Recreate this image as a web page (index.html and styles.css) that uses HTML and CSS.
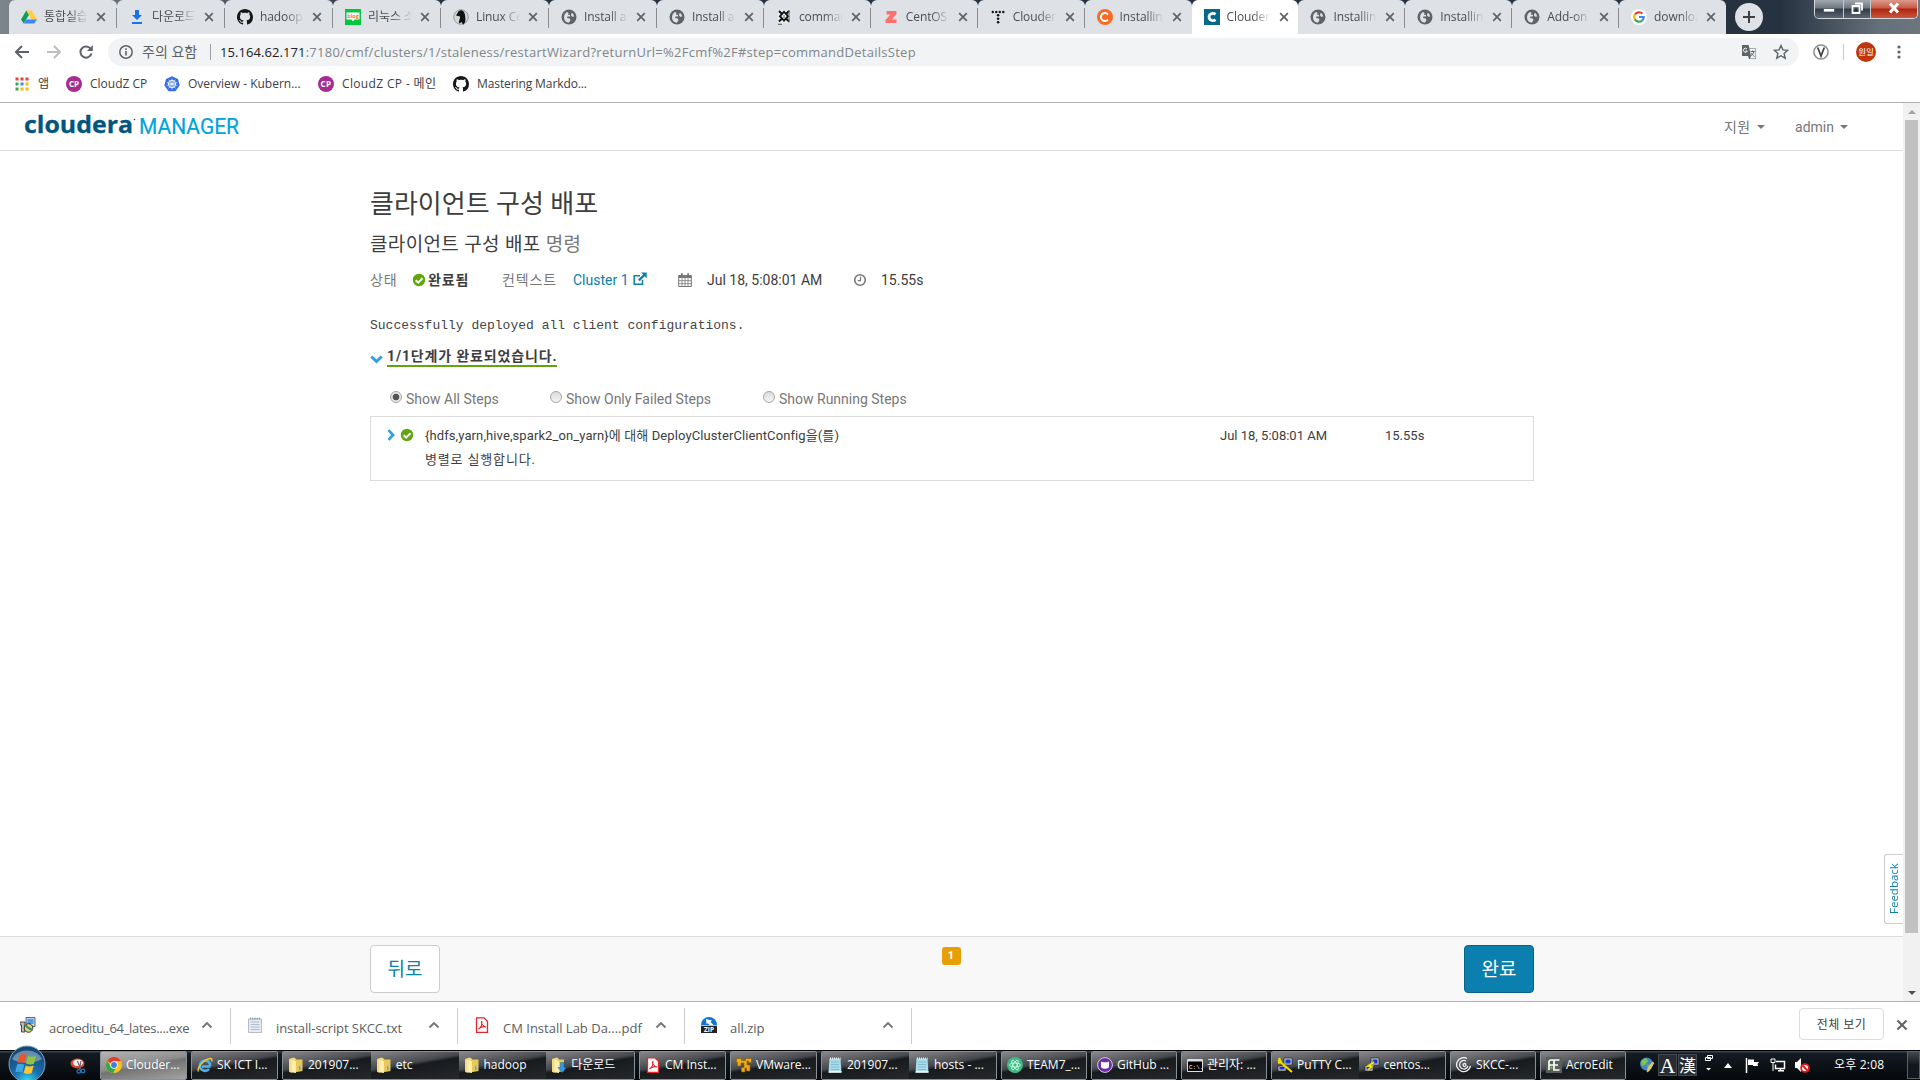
FILE: index.html
```html
<!DOCTYPE html>
<html lang="ko">
<head>
<meta charset="utf-8">
<title>Cloudera Manager</title>
<link rel="stylesheet" href="styles.css">
</head>
<body>
<svg class="defs" aria-hidden="true">
  <symbol id="x" viewBox="0 0 10 10"><path d="M1.2 1.2l7.6 7.6M8.8 1.2L1.2 8.8" stroke="#5f6368" stroke-width="1.7" fill="none"/></symbol>
  <symbol id="up" viewBox="0 0 12 8"><path d="M1.5 6.5L6 2l4.500 4.500" stroke="#757575" stroke-width="1.900" fill="none"/></symbol>
  <symbol id="drive" viewBox="0 0 16 16"><path d="M5.300 1.500L0 10.500l2.700 4L8 5.800z" fill="#0f9d58"/><path d="M5.300 1.500h5.400l5.300 9h-5.300z" fill="#ffcd40"/><path d="M5.200 10.500H16l-2.700 4H2.700z" fill="#4285f4"/></symbol>
  <symbol id="dl" viewBox="0 0 16 16"><path d="M6 1h4v5h3l-5 5-5-5h3zM3 13h10v2H3z" fill="#1a73e8"/></symbol>
  <symbol id="gh" viewBox="0 0 16 16"><path fill="#161616" d="M8 0C3.580 0 0 3.580 0 8c0 3.540 2.290 6.530 5.470 7.590.4.070.550-.170.550-.380 0-.190-.010-.820-.010-1.490-2.010.370-2.530-.490-2.690-.940-.090-.230-.480-.940-.820-1.130-.280-.150-.680-.520-.010-.530.630-.010 1.080.580 1.230.820.720 1.210 1.870.870 2.330.660.070-.520.280-.870.510-1.070-1.780-.2-3.640-.890-3.640-3.950 0-.870.310-1.590.820-2.150-.080-.2-.360-1.020.080-2.120 0 0 .670-.210 2.200.820.640-.180 1.320-.270 2-.270s1.360.090 2 .270c1.530-1.040 2.200-.820 2.200-.820.440 1.100.160 1.920.080 2.120.510.560.820 1.270.820 2.150 0 3.070-1.870 3.750-3.650 3.950.290.250.540.730.540 1.480 0 1.070-.010 1.930-.010 2.200 0 .210.150.460.550.380A8.010 8.010 0 0016 8c0-4.420-3.580-8-8-8z"/></symbol>
  <symbol id="blog" viewBox="0 0 16 16"><path d="M0 0h16v16H0z" fill="#03c63c"/><path d="M1.500 3.500h13v7H9.500L8 12.500l-1.500-2h-5z" fill="#fff"/><text x="8" y="9" font-size="5.500" font-weight="700" text-anchor="middle" fill="#f47a20" font-family="Open Sans">blog</text></symbol>
  <symbol id="penguin" viewBox="0 0 16 16"><circle cx="8" cy="8" r="7.300" fill="#d4d7da" stroke="#8f9296" stroke-width=".9"/><path d="M4.500 4C5.500 1 9 0 11 3c1.500 3 1.700 8 1.200 10l-2 2.800L8.500 13l-2 1.500C5 12 7.500 10 7 7.500L3 6.500z" fill="#111"/></symbol>
  <symbol id="globe" viewBox="0 0 16 16"><circle cx="8" cy="8" r="7.500" fill="#5f6368"/><path d="M3 8.500C3 6 4 4 6 3l1.500.8L7 5.500l2 .5v1.500H6.500L6 9l2.800.5.7 1.800-1.700 2.500C5 13.500 3 11.500 3 8.500zM10.500 4l1.500.5 1.300 3-2.300.3-1-1.500z" fill="#dee1e6"/></symbol>
  <symbol id="cmd" viewBox="0 0 16 16"><path d="M2.500 1.500h11v12h-11z" fill="#f4f4f4"/><path d="M3 2l3 3M13 2l-3 3M3 12.500l3-3M13 12.500l-3-3" stroke="#111" stroke-width="2"/><path d="M8 2.800l4 4.400-4 4.400-4-4.400z" stroke="#111" stroke-width="1.900" fill="#fff"/><path d="M8 6v3M13 1v12.500M2 15.300h4" stroke="#555"/></symbol>
  <symbol id="zed" viewBox="0 0 16 16"><path d="M3.500 2h10v3l-4.700 5.500h4.700V14h-11v-3l4.800-5.600H3.500z" fill="#ff6f6b"/></symbol>
  <symbol id="dots" viewBox="0 0 16 16" fill="#111"><circle cx="2.800" cy="3" r="1.200"/><circle cx="6.300" cy="3" r="1.200"/><circle cx="9.800" cy="3" r="1.200"/><circle cx="13.300" cy="3" r="1.200"/><circle cx="8.100" cy="6.300" r="1.300"/><circle cx="8.100" cy="9.800" r="1.300"/><circle cx="8.100" cy="13.300" r="1.300"/></symbol>
  <symbol id="oc" viewBox="0 0 16 16"><circle cx="8" cy="8" r="8" fill="#f96a22"/><path d="M11 5.500a4 4 0 100 5" stroke="#fff" stroke-width="2" fill="none"/></symbol>
  <symbol id="cc" viewBox="0 0 16 16"><path d="M0 0h16v16H0z" fill="#04698a"/><path d="M11.500 5.300a3.900 3.600 0 100 5.400" stroke="#fff" stroke-width="2.800" fill="none"/></symbol>
  <symbol id="google" viewBox="0 0 16 16"><circle cx="8" cy="8" r="8" fill="#fff"/><g fill="none" stroke-width="2.200"><path d="M4 5.500A4.800 4.800 0 0111.400 4.600" stroke="#ea4335"/><path d="M4 5.400a5 5 0 000 5.200" stroke="#fbbc05"/><path d="M3.900 10.400a4.800 4.800 0 007.200 1.200" stroke="#34a853"/><path d="M8 8h4.700a5 5 0 01-1.500 3.700" stroke="#4285f4"/></g></symbol>
  <symbol id="cp" viewBox="0 0 16 16"><circle cx="8" cy="8" r="8" fill="#a62c91"/><text x="8" y="11" font-size="8" font-weight="700" text-anchor="middle" fill="#fff" font-family="Open Sans">CP</text></symbol>
  <symbol id="k8s" viewBox="0 0 16 16"><path d="M8 .2l6 2.900 1.600 6.400-4.200 5.800H4.600L.4 9.500 2 3.100z" fill="#326ce5"/><g stroke="#fff" fill="none"><circle cx="8" cy="8" r="3.600"/><path d="M8 2.500v11M2.700 6.500l10.600 3M13.300 6.500l-10.600 3M4.700 12.300l6.600-8.600M11.300 12.300L4.700 3.700" stroke-width=".7"/></g></symbol>
  <symbol id="apps" viewBox="0 0 14 14"><path d="M.5.500h3v3h-3zM5.500.500h3v3h-3zM10.500.500h3v3h-3z" fill="#ea4335"/><path d="M.5 5.500h3v3h-3z" fill="#34a853"/><path d="M5.500 5.500h3v3h-3z" fill="#4285f4"/><path d="M10.500 5.500h3v3h-3z" fill="#fbbc05"/><path d="M.5 10.500h3v3h-3z" fill="#34a853"/><path d="M5.500 10.500h3v3h-3zM10.500 10.500h3v3h-3z" fill="#fbbc05"/></symbol>
  <symbol id="ok" viewBox="0 0 14 14"><circle cx="7" cy="7" r="6.200" fill="#61a60e"/><path d="M3.700 7.200L6.200 9.700l4.300-4.400" stroke="#fff" stroke-width="2" fill="none"/></symbol>
  <symbol id="pdf" viewBox="0 0 16 16"><path d="M2.500.8h7.500l3.500 3.500v11h-11z" fill="#fff" stroke="#e5252a" stroke-width="1.300"/><path d="M4.500 12c2.500-1.500 4-5 3.300-7.500C6.500 5 8.500 9.500 12 10c-1.500-1-5.500 0-7.500 2z" stroke="#e5252a" fill="none" stroke-width="1.100"/></symbol>
  <symbol id="folder" viewBox="0 0 16 16"><path d="M1 2l5-1.500L8 2v13l-5 .8-2-1z" fill="#f3dc83"/><path d="M6 2.500h8.500V14L6 15.500z" fill="#e9c75a"/><path d="M3.500 3l4.500 1v12l-4.500-1z" fill="#fbeeb0"/><path d="M11 9h1.500v4H11z" fill="#5aa7d8"/></symbol>
  <symbol id="folderdl" viewBox="0 0 16 16"><path d="M1 2l5-1.500L8 2v13l-5 .8-2-1z" fill="#f3dc83"/><path d="M6 2.500h7V14L6 15.500z" fill="#e9c75a"/><path d="M3.500 3l4.500 1v12l-4.500-1z" fill="#fbeeb0"/><path d="M9.500 5.500h3.500v5h2.500L11.200 15.500 7 10.500h2.500z" fill="#2e9be6" stroke="#1266aa" stroke-width=".5"/></symbol>
  <symbol id="note" viewBox="0 0 16 16"><path d="M2.500 1.500h11l1 14H1.500z" fill="#a9dbe8"/><path d="M2 14h12.500v1.700H1.500z" fill="#e8f5f8"/><path d="M3 1.500h10.500" stroke="#eee" stroke-width="2" stroke-dasharray="1 1"/><path d="M4 5h8M4 7.500h8M4 10h8M4 12.500h8" stroke="#78b6c9" stroke-width=".8"/></symbol>
  <symbol id="putty" viewBox="0 0 16 16"><path d="M7 1h8v7H7zM1 9h8v5H1z" fill="#c5c9cf" stroke="#222" stroke-width=".7"/><path d="M8.500 2.500h5v4h-5zM2.500 10h5v2.500h-5z" fill="#1b35d0"/><path d="M10 5L4 9h4l-4 4" stroke="#ffe600" stroke-width="1.700" fill="none"/></symbol>
  <symbol id="puttyc" viewBox="0 0 16 16"><path d="M7 1h8v7H7zM1 9h8v5H1z" fill="#c5c9cf" stroke="#222" stroke-width=".7"/><path d="M8.500 2.500h5v4h-5zM2.500 10h5v2.500h-5z" fill="#1b35d0"/><path d="M1 3l14 12M2 1l2 4-3 1" stroke="#f4dc00" stroke-width="2.200" fill="none"/></symbol>
</svg>

<header class="tabs">
  <div class="tab-list">
    <div class="tab"><svg><use href="#drive"/></svg><span>통합실습</span><i><svg><use href="#x"/></svg></i></div>
    <div class="tab"><svg><use href="#dl"/></svg><span>다운로드</span><i><svg><use href="#x"/></svg></i></div>
    <div class="tab"><svg><use href="#gh"/></svg><span>hadoop/</span><i><svg><use href="#x"/></svg></i></div>
    <div class="tab"><svg><use href="#blog"/></svg><span>리눅스 소</span><i><svg><use href="#x"/></svg></i></div>
    <div class="tab"><svg><use href="#penguin"/></svg><span>Linux Co</span><i><svg><use href="#x"/></svg></i></div>
    <div class="tab"><svg><use href="#globe"/></svg><span>Install a</span><i><svg><use href="#x"/></svg></i></div>
    <div class="tab"><svg><use href="#globe"/></svg><span>Install a</span><i><svg><use href="#x"/></svg></i></div>
    <div class="tab"><svg><use href="#cmd"/></svg><span>comman</span><i><svg><use href="#x"/></svg></i></div>
    <div class="tab"><svg><use href="#zed"/></svg><span>CentOS</span><i><svg><use href="#x"/></svg></i></div>
    <div class="tab"><svg><use href="#dots"/></svg><span>Clouder</span><i><svg><use href="#x"/></svg></i></div>
    <div class="tab plain"><svg><use href="#oc"/></svg><span>Installing</span><i><svg><use href="#x"/></svg></i></div>
    <div class="tab active"><svg><use href="#cc"/></svg><span>Clouder</span><i><svg><use href="#x"/></svg></i></div>
    <div class="tab"><svg><use href="#globe"/></svg><span>Installing</span><i><svg><use href="#x"/></svg></i></div>
    <div class="tab"><svg><use href="#globe"/></svg><span>Installing</span><i><svg><use href="#x"/></svg></i></div>
    <div class="tab"><svg><use href="#globe"/></svg><span>Add-on</span><i><svg><use href="#x"/></svg></i></div>
    <div class="tab plain"><svg><use href="#google"/></svg><span>downloa</span><i><svg><use href="#x"/></svg></i></div>
  </div>
  <div class="new-tab"><svg viewBox="0 0 14 14"><path d="M7 1v12M1 7h12" stroke="#3c4043" stroke-width="2"/></svg></div>
  <div class="window-buttons">
    <b><svg viewBox="0 0 12 12"><path d="M.5 6.500h11v3.500H.5z" fill="#fff" stroke="#445" stroke-width=".7"/></svg></b>
    <b><svg viewBox="0 0 12 12"><path d="M4 1.500h7v7M1.500 4h7v7h-7z" fill="none" stroke="#fff" stroke-width="1.800"/><path d="M4 6.500h2V9H4z" fill="#334"/></svg></b>
    <b class="close"><svg viewBox="0 0 12 12"><path d="M2 1.500l8 9M10 1.500l-8 9" stroke="#fff" stroke-width="3"/></svg></b>
  </div>
</header>

<div class="toolbar">
  <svg class="nav" viewBox="0 0 14 14"><path d="M14 7H1.500M7 1L1 7l6 6" stroke="#5f6368" stroke-width="2" fill="none"/></svg>
  <svg class="nav" viewBox="0 0 14 14"><path d="M0 7h12.500M7 1l6 6-6 6" stroke="#bcbec1" stroke-width="2" fill="none"/></svg>
  <svg class="nav" viewBox="0 0 14 14"><path d="M11.800 4A5.600 5.600 0 1012.500 8.500" stroke="#5f6368" stroke-width="2" fill="none"/><path d="M13.800 0v6H8z" fill="#5f6368"/></svg>
  <div class="address">
    <svg class="nav" viewBox="0 0 14 14"><circle cx="7" cy="7" r="6.200" stroke="#5f6368" stroke-width="1.500" fill="none"/><path d="M7 6v4.500M7 3.300v1.600" stroke="#5f6368" stroke-width="1.600"/></svg>
    <span class="warn">주의 요함</span>
    <span class="url"><b>15.164.62.171</b>:7180/cmf/clusters/1/staleness/restartWizard?returnUrl=%2Fcmf%2F#step=commandDetailsStep</span>
    <svg class="translate" viewBox="0 0 16 16"><path d="M1 1h6.500l1 3.500H15V15H8l-1-3H1z" fill="#5f6368"/><path d="M8.500 5h6v9.500H9l1-2.500z" fill="#f1f3f4"/><path d="M9.500 7.500h4.300M11.500 6.500v1M12.800 7.800c-.5 2-1.500 3-3 4M10.500 9c.5 1.500 1.500 2.500 3 3.500" stroke="#5f6368" fill="none"/><path d="M6 5A2 2 0 106.300 7H4.500" stroke="#fff" fill="none"/></svg>
    <svg class="star" viewBox="0 0 16 16"><path d="M8 1.500l1.900 4.400 4.800.400-3.600 3.200 1.100 4.700L8 11.700l-4.200 2.500 1.100-4.700L1.300 6.300l4.800-.400z" fill="none" stroke="#5f6368" stroke-width="1.400"/></svg>
  </div>
  <svg class="vext" viewBox="0 0 16 16"><circle cx="8" cy="8" r="7.100" fill="none" stroke="#8a8d90" stroke-width="1.500"/><path d="M4.700 3.500L8 12l3.300-8.500" stroke="#444" stroke-width="1.800" fill="none"/></svg>
  <div class="divider"></div>
  <div class="avatar">원일</div>
  <svg class="menu" viewBox="0 0 4 14" fill="#5f6368"><circle cx="2" cy="2" r="1.600"/><circle cx="2" cy="7" r="1.600"/><circle cx="2" cy="12" r="1.600"/></svg>
</div>

<nav class="bookmarks">
  <a class="bm-apps"><svg><use href="#apps"/></svg>앱</a>
  <a class="bm-cp"><svg><use href="#cp"/></svg>CloudZ CP</a>
  <a class="bm-k8s"><svg><use href="#k8s"/></svg>Overview - Kubern...</a>
  <a class="bm-main"><svg><use href="#cp"/></svg>CloudZ CP - 메인</a>
  <a class="bm-md"><svg><use href="#gh"/></svg>Mastering Markdo...</a>
</nav>

<div class="viewport">
  <div class="page">
    <header class="app-bar">
      <svg class="logo" viewBox="0 0 218 30"><text x="0" y="22.500" textLength="109" lengthAdjust="spacingAndGlyphs" class="logo-brand">cloudera</text><circle cx="110.500" cy="9.500" r=".8" fill="#00567f"/><text x="115" y="23.500" textLength="100" lengthAdjust="spacingAndGlyphs" class="logo-product">MANAGER</text></svg>
      <div class="user-menu"><span class="m-support">지원<i class="caret"></i></span><span class="m-admin">admin<i class="caret"></i></span></div>
    </header>
    <main class="content">
      <h1>클라이언트 구성 배포</h1>
      <h2>클라이언트 구성 배포 <small>명령</small></h2>
      <div class="status">
        <span class="c1 mute">상태</span>
        <span class="c2"><svg class="ok"><use href="#ok"/></svg><b>완료됨</b></span>
        <span class="c3 mute">컨텍스트</span>
        <a class="c4">Cluster 1<svg viewBox="0 0 14 14"><path d="M9.500 8v4.300H1.200V3.700H7" stroke="#0b7fad" stroke-width="1.500" fill="none"/><path d="M8 .5h5.700v5.700l-2-2-5 5-1.600-1.600 5-5z" fill="#0b7fad"/></svg></a>
        <span class="c5"><svg viewBox="0 0 14 14"><path d="M.7 2.500h12.600v11H.7z" stroke="#777" fill="none"/><path d="M.7 2.500h12.600v2.600H.7zM3 .3h1.800v3H3zM9.200.3H11v3H9.200z" fill="#777"/><path d="M4 5v8.500M7 5v8.500M10 5v8.500M.7 7.700h12.600M.7 10.700h12.600" stroke="#777" stroke-width=".8"/></svg></span>
        <span class="c6">Jul 18, 5:08:01 AM</span>
        <span class="c7"><svg viewBox="0 0 14 14"><circle cx="7" cy="7" r="5.300" stroke="#777" stroke-width="1.600" fill="none"/><path d="M7.500 3.700v4H4.700" stroke="#777" stroke-width="1.200" fill="none"/></svg></span>
        <span>15.55s</span>
      </div>
      <pre>Successfully deployed all client configurations.</pre>
      <div class="progress"><svg viewBox="0 0 13 9"><path d="M1.300 1.500l5.200 5 5.200-5" stroke="#2fa0dc" stroke-width="3" fill="none"/></svg><b>1/1단계가 완료되었습니다.</b></div>
      <div class="filters">
        <label class="f1"><i class="radio on"></i>Show All Steps</label>
        <label class="f2"><i class="radio"></i>Show Only Failed Steps</label>
        <label><i class="radio"></i>Show Running Steps</label>
      </div>
      <section class="step">
        <svg class="arrow" viewBox="0 0 8 12"><path d="M1.500 1.200L6 6l-4.500 4.800" stroke="#2fa0dc" stroke-width="2.700" fill="none"/></svg>
        <svg class="ok"><use href="#ok"/></svg>
        <p><span class="line1">{hdfs,yarn,hive,spark2_on_yarn}에 대해 DeployClusterClientConfig을(를)</span><br>병렬로 실행합니다.</p>
        <time>Jul 18, 5:08:01 AM</time>
        <span class="duration">15.55s</span>
      </section>
    </main>
    <aside class="feedback">Feedback</aside>
    <footer class="wizard"><button class="back">뒤로</button><span class="badge">1</span><button class="done">완료</button></footer>
  </div>
  <div class="scrollbar"><i class="s-up"></i><div class="thumb"></div><i class="s-down"></i></div>
</div>

<div class="downloads">
  <div class="dl"><svg viewBox="0 0 16 16"><path d="M6 .500h9v9H6z" fill="#c9d3df" stroke="#345" stroke-width=".8"/><path d="M7.500 2h6v5h-6z" fill="#4c9be8"/><path d="M0 5h5v10H1.500V8H0z" fill="#bbb" stroke="#222" stroke-width=".8"/><circle cx="8.500" cy="11" r="4.300" fill="#ded46b" stroke="#111" stroke-width=".8"/><path d="M8.500 11L5 8M8.500 11l4 2" stroke="#2a8b80" stroke-width="2"/></svg><span class="w1">acroeditu_64_lates....exe</span><svg class="up"><use href="#up"/></svg></div>
  <div class="dl"><svg viewBox="0 0 16 16"><path d="M1.500 2h13v13.500h-13z" fill="#e8ecf0" stroke="#a8adb3" stroke-width=".8"/><path d="M3 1.500h11" stroke="#888" stroke-width="1.500" stroke-dasharray="1.200 1"/><path d="M3.500 5h9M3.500 7.500h9M3.500 10h9M3.500 12.500h9" stroke="#a9c0d4"/></svg><span class="w2">install-script SKCC.txt</span><svg class="up"><use href="#up"/></svg></div>
  <div class="dl"><svg><use href="#pdf"/></svg><span class="w3">CM Install Lab Da....pdf</span><svg class="up"><use href="#up"/></svg></div>
  <div class="dl"><svg viewBox="0 0 16 16"><path d="M0 8a8 8 0 0116 0z" fill="#0b76d8"/><path d="M5 2l6 1.500L9.500 5l3 3H8.500L6.800 6.200 5.500 7z" fill="#fff"/><path d="M0 8.700h16V16H0z" fill="#242424"/><text x="8" y="14.800" font-size="6.500" font-weight="700" text-anchor="middle" fill="#fff" font-family="Open Sans">ZIP</text></svg><span class="w4">all.zip</span><svg class="up"><use href="#up"/></svg></div>
  <button class="show-all">전체 보기</button>
  <svg class="dl-close"><use href="#x"/></svg>
</div>

<div class="taskbar">
  <div class="launch">
    <svg class="orb" viewBox="0 0 38 38"><defs><radialGradient id="orbFill" cx=".5" cy="1" r=".95"><stop offset="0" stop-color="#38e0ff"/><stop offset=".4" stop-color="#1a6fae"/><stop offset="1" stop-color="#17466f"/></radialGradient></defs><circle cx="19" cy="19" r="18" fill="url(#orbFill)" stroke="#7ea3c0"/><path d="M4 14a16 13 0 0130 0c-8 5-22 5-30 0z" fill="#fff" opacity=".35"/><path d="M11.500 10c3-1.500 5-1.200 7 0l-2 8c-2.500-1.300-4.500-1-7 0z" fill="#ee5526"/><path d="M20 10.700c3 1.500 5.500 1 8 0l-2 8c-2.500 1.200-5.500 1-8-.3z" fill="#8ec63f"/><path d="M9 19.500c2.500-1.200 5-1 7.200.2l-2 8c-2.300-1.300-4.500-1-7-.2z" fill="#3fa5e5"/><path d="M17.700 20.500c2.500 1.300 5 1.200 8 0l-2 7.500c-3 1.500-5.500 1.200-8-.2z" fill="#fdc52d"/></svg>
    <svg class="snip" viewBox="0 0 16 16"><ellipse cx="7.500" cy="5.500" rx="7" ry="5" fill="#d8492e"/><ellipse cx="8" cy="4.800" rx="5" ry="3.300" fill="#f1f1f1"/><path d="M7.500 3l3 8M11 3l-1.500 8" stroke="#667" stroke-width="1.200"/><circle cx="8.800" cy="13.400" r="1.800" fill="none" stroke="#1a7dbd" stroke-width="1.300"/><circle cx="13" cy="13" r="1.800" fill="none" stroke="#1a7dbd" stroke-width="1.300"/></svg>
  </div>
  <div class="group g87"><a class="task current"><svg viewBox="0 0 16 16"><circle cx="8" cy="8" r="8" fill="#fbc116"/><path d="M8 8L1.100 4A8 8 0 0115 4H8z" fill="#e33b2e"/><path d="M1.100 4A8 8 0 007 16l3.500-6L5 10z" fill="#2da94f"/><circle cx="8" cy="8" r="3.700" fill="#fff"/><circle cx="8" cy="8" r="2.900" fill="#3f7ee8"/></svg>Clouder...</a></div>
  <div class="group g87"><a class="task"><svg viewBox="0 0 16 16"><path d="M13.500 9.500H5M13.200 8.800a5.200 5.200 0 10-1.200 3.200" stroke="#49b5ef" stroke-width="2.600" fill="none"/><path d="M1.500 14.500C-.5 11 7 2 13.500 1.500c2 .2 1.500 2 1 3" stroke="#f5c430" stroke-width="1.400" fill="none"/></svg>SK ICT I...</a></div>
  <div class="group g353"><a class="task"><svg><use href="#folder"/></svg>201907...</a><a class="task"><svg><use href="#folder"/></svg>etc</a><a class="task"><svg><use href="#folder"/></svg>hadoop</a><a class="task"><svg><use href="#folderdl"/></svg>다운로드</a></div>
  <div class="group g87"><a class="task"><svg><use href="#pdf"/></svg>CM Inst...</a></div>
  <div class="group g87"><a class="task"><svg viewBox="0 0 16 16"><path d="M.5 1.500h5v2h4v-2h6v4h-3v-1.500H11V8h3v6h-3.500v-3H9v4H5.500v-4.500H8V6H5v3H1.500V5.500h-1z" fill="#f1ac12" stroke="#8c5d00" stroke-width=".6"/></svg>VMware...</a></div>
  <div class="group g176"><a class="task"><svg><use href="#note"/></svg>201907...</a><a class="task"><svg><use href="#note"/></svg>hosts - ...</a></div>
  <div class="group g86"><a class="task"><svg viewBox="0 0 16 16"><circle cx="8" cy="8" r="8" fill="#40b883"/><g fill="none" stroke="#d8ffe9" stroke-width=".8"><ellipse cx="8" cy="8" rx="5.500" ry="2"/><ellipse cx="8" cy="8" rx="5.500" ry="2" transform="rotate(60 8 8)"/><ellipse cx="8" cy="8" rx="5.500" ry="2" transform="rotate(120 8 8)"/></g></svg>TEAM7_...</a></div>
  <div class="group g86"><a class="task"><svg viewBox="0 0 16 16"><circle cx="8" cy="8" r="7.400" fill="#6f2da0" stroke="#d9c5ea"/><path d="M4 4.500l2 .8h4l2-.8v5c0 3-8 3-8 0z" fill="#fff"/></svg>GitHub ...</a></div>
  <div class="group g86"><a class="task"><svg viewBox="0 0 16 16"><path d="M.5 2.500h15v12H.5z" fill="#000" stroke="#ddd"/><path d="M1 3h14v1.500H1z" fill="#ddd"/><text x="2" y="11.500" font-size="6" fill="#fff" font-family="Liberation Mono">C:\.</text></svg>관리자: ...</a></div>
  <div class="group g175"><a class="task"><svg><use href="#puttyc"/></svg>PuTTY C...</a><a class="task"><svg><use href="#putty"/></svg>centos...</a></div>
  <div class="group g86"><a class="task"><svg viewBox="0 0 16 16"><g fill="none" stroke="#eee" stroke-width="1.300"><path d="M11 1.500A7 7 0 1014.500 9"/><path d="M10 4A4.300 4.300 0 1012 9"/><circle cx="8.500" cy="8" r="1.500"/></g></svg>SKCC-...</a></div>
  <div class="group g86"><a class="task"><svg viewBox="0 0 16 16"><path d="M0 0h16v16H0z" fill="#5a5f5a"/><path d="M3 13V5q0-2 2-2h3v10M3 8h5M13.500 3H8v10h5.500M8 8h4" stroke="#fff" stroke-width="1.700" fill="none"/><path d="M4.500 9.500h2V12h-2z" fill="#6fb942"/></svg>AcroEdit</a></div>
  <div class="tray">
    <svg class="t-globe" viewBox="0 0 16 16"><circle cx="7.500" cy="7" r="6.500" fill="#4686b8"/><path d="M2 4l5-3 2 3-3 4-3 1zM8 8l5-1-1 5-3 1z" fill="#7ec35a"/><path d="M15 6l-5 8-2 1 .5-2.500L13.500 5z" fill="#f7b62d" stroke="#eee" stroke-width=".5"/></svg>
    <b class="ime latin">A</b><b class="ime">漢</b>
    <svg class="t-opt" viewBox="0 0 10 18"><path d="M3.500 1.500h5v3h-5zM1.500 3.500h5v3h-5z" fill="#111820" stroke="#fff"/><path d="M2 14h5l-2.500 2.500z" fill="#fff"/></svg>
    <svg class="t-up" viewBox="0 0 8 5"><path d="M0 5l4-5 4 5z" fill="#fff"/></svg>
    <svg class="t-flag" viewBox="0 0 16 16"><path d="M1.500 1v15" stroke="#fff" stroke-width="1.500"/><path d="M3 2.500h6V5h5l-1.500 2L13 9H8V8H3z" fill="#fff"/></svg>
    <svg class="t-net" viewBox="0 0 16 16"><path d="M6 4.500h8.500v7H5.500v-4M8 13.800h6M10.500 12v2" stroke="#fff" stroke-width="1.500" fill="none"/><path d="M1 2v3.500h4V2M3 5.500V14M2 1v2M4 1v2" stroke="#fff" fill="none"/></svg>
    <svg class="t-vol" viewBox="0 0 16 16"><path d="M1 5h2l4-4v14l-4-4H1z" fill="#fff"/><circle cx="11" cy="11" r="3.900" fill="#fff" stroke="#e01b1b" stroke-width="1.800"/><path d="M8.500 8.500l5 5" stroke="#e01b1b" stroke-width="1.800"/></svg>
    <span class="clock">오후 2:08</span>
    <i class="peek"></i>
  </div>
</div>
</body>
</html>
```
FILE: styles.css
```css
* { box-sizing: border-box; }
body {
  margin: 0; width: 1920px; height: 1080px; overflow: hidden;
  display: flex; flex-direction: column; background: #fff;
  font: 12px/16px "Open Sans", "Noto Sans CJK KR", sans-serif; color: #3c4043;
}
svg { display: block; flex: none; width: 16px; height: 16px; }
button { font: inherit; padding: 0; }
.defs { display: none; }

/* tab strip */
.tabs {
  height: 34px; flex: none; display: flex; padding-left: 9px;
  background: linear-gradient(90deg, #7c838b 0, #555e69 200px, #273240 420px, #273240 1780px, #65707b 1880px, #6d757d);
}
.tab-list { width: 1717px; display: grid; grid-template-columns: repeat(6, 108px) repeat(10, 1fr); }
.tab {
  position: relative; display: flex; align-items: center; background: #dee1e6;
  border-radius: 6px 6px 0 0; padding-left: 12px; min-width: 0;
}
.tab::after { content: ""; position: absolute; right: 0; top: 8px; width: 1px; height: 20px; background: #888c91; }
.tab.plain::after, .tab.active::after { display: none; }
.tab.active { background: #fff; }
.tab span {
  flex: none; width: 44px; margin-left: 7px; white-space: nowrap; letter-spacing: -.1px; color: #4a4d51;
  -webkit-mask-image: linear-gradient(90deg, #000 58%, transparent);
  mask-image: linear-gradient(90deg, #000 58%, transparent);
}
.tab i { margin-left: 8px; }
.tab i svg { width: 10px; height: 10px; }
.new-tab {
  width: 28px; height: 28px; margin: 3px 0 0 9px; border-radius: 50%; background: #dee1e6;
  display: grid; place-items: center;
}
.new-tab svg { width: 14px; height: 14px; }
.window-buttons {
  width: 104px; height: 19px; margin-left: 51px; display: grid; grid-template-columns: 29px 27px 1fr;
  border: 1px solid #d3d8dc; border-top: 0; border-radius: 0 0 5px 5px; overflow: hidden;
}
.window-buttons b { display: grid; place-items: center; padding-bottom: 2px; background: linear-gradient(#a2a8af, #6d757e 45%, #303b48 50%, #5c6671); border-right: 1px solid #c3c8cd; }
.window-buttons b.close { border: 0; background: linear-gradient(#dd9a8c, #c75a45 45%, #ad2410 50%, #c9573c); }
.window-buttons svg { width: 12px; height: 12px; }

/* address bar */
.toolbar { height: 36px; flex: none; display: flex; align-items: center; padding-left: 15px; }
.nav { width: 14px; height: 14px; margin-right: 18px; }
.address {
  width: 1691px; height: 28px; margin-left: -3px; border-radius: 14px; background: #f1f3f4;
  display: flex; align-items: center; padding-left: 11px; font-size: 13px;
}
.address .nav { margin-right: 9px; }
.warn { width: 69px; height: 16px; border-right: 1px solid #9aa0a6; color: #5f6368; font-size: 14px; line-height: 16px; }
.url { width: 1521px; margin-left: 9px; color: #80868b; white-space: nowrap; letter-spacing: .27px; }
.url b { font-weight: 400; color: #202124; letter-spacing: .08px; }
.star { margin-left: 16px; }
.vext { margin-left: 14px; }
.divider { width: 1px; height: 16px; margin: 0 12px 0 14px; background: #c8cacd; }
.avatar { width: 20px; height: 20px; border-radius: 50%; background: #bf360c; color: #fff; font-size: 8.5px; line-height: 20px; text-align: center; }
.menu { width: 4px; height: 14px; margin-left: 21px; }

/* bookmarks */
.bookmarks { height: 33px; flex: none; display: flex; align-items: center; padding: 0 0 4px 15px; border-bottom: 1px solid #b1b1b1; }
.bookmarks a { display: flex; align-items: center; gap: 8px; white-space: nowrap; }
.bm-apps { width: 51px; }
.bm-apps svg { width: 14px; height: 14px; margin-right: 1px; }
.bm-cp { width: 98px; }
.bm-k8s { width: 154px; }
.bm-main { width: 135px; letter-spacing: .35px; }
.bm-md { letter-spacing: -.1px; }

/* page viewport */
.viewport { height: 899px; flex: none; display: flex; border-bottom: 1px solid #b1b1b1; }
.page { position: relative; width: 1903px; display: flex; flex-direction: column; font-family: Roboto, "Noto Sans CJK KR", sans-serif; color: #3d3d3d; }
.app-bar { height: 48px; flex: none; display: flex; justify-content: space-between; padding: 0 55px 0 24px; border-bottom: 1px solid #dcdcdc; }
.logo { width: 218px; height: 30px; margin-top: 7px; }
.logo-brand { font: 700 24px "Open Sans", sans-serif; fill: #00567f; stroke: #00567f; stroke-width: .3px; }
.logo-product { font: 400 22px Roboto, sans-serif; fill: #00a4dc; stroke: #00a4dc; stroke-width: .2px; }
.user-menu { display: flex; font-size: 14px; line-height: 46px; color: #777; }
.user-menu span { display: flex; align-items: center; gap: 6px; }
.m-support { width: 71px; letter-spacing: .4px; }
.caret { border: 4px solid transparent; border-top-color: #777; border-bottom: 0; }
.content { width: 1164px; margin-left: 370px; flex: 1; }
h1 { margin: 35px 0 0; font-size: 26px; line-height: 36px; font-weight: 400; white-space: nowrap; }
h2 { margin: 11px 0 0; font-size: 19px; line-height: 24px; font-weight: 400; white-space: nowrap; letter-spacing: .35px; }
h2 small { font-size: 100%; color: #777; }
.status { display: flex; align-items: center; height: 20px; margin-top: 13px; font-size: 14px; line-height: 20px; white-space: nowrap; }
.status span, .status a { display: flex; align-items: center; }
.mute { color: #777; letter-spacing: .9px; }
.ok { width: 14px; height: 14px; }
.status .ok { margin-right: 2px; }
.status b { letter-spacing: .9px; }
.c1 { width: 42px; } .c2 { width: 90px; } .c3 { width: 71px; }
.c4 { width: 105px; color: #0b7fad; }
.c4 svg { width: 14px; height: 14px; margin: -2px 0 0 4px; }
.c5 { width: 29px; } .c6 { width: 146px; } .c7 { width: 28px; }
.c5 svg, .c7 svg { width: 14px; height: 14px; }
pre { margin: 26px 0 0; font: 13px/20px "Liberation Mono", monospace; color: #444; }
.progress { display: flex; height: 20px; margin-top: 10px; font-size: 14px; line-height: 20px; }
.progress svg { width: 13px; height: 9px; margin: 9px 4px 0 0; }
.progress b { height: 21px; border-bottom: 2px solid #61a60e; white-space: nowrap; font-weight: 700; letter-spacing: .85px; }
.filters { display: flex; height: 20px; margin: 23px 0 0 20px; font-size: 14px; line-height: 21px; color: #777; }
.filters label { display: flex; white-space: nowrap; }
.f1 { width: 160px; } .f2 { width: 213px; }
.radio { width: 12px; height: 12px; margin: 2px 4px 0 0; border: 1px solid #a5a5a5; border-radius: 50%; background: linear-gradient(#dcdcdc, #f4f4f4); }
.radio.on { background: radial-gradient(circle, #555 0 3px, #e8e8e8 3.7px); }
.step { display: flex; height: 65px; margin-top: 7px; padding: 7px 0 0 16px; border: 1px solid #dcdcdc; font-size: 13px; line-height: 24px; white-space: nowrap; }
.step .arrow { width: 8px; height: 12px; margin: 5px 5px 0 0; }
.step .ok { margin-top: 4px; }
.step p { width: 795px; margin: 0 0 0 11px; letter-spacing: .85px; }
.step .line1 { letter-spacing: .1px; }
.step time { width: 165px; }
.feedback {
  position: absolute; right: 0; top: 751px; width: 19px; height: 70px;
  background: #fff; color: #0b7fad; font-family: "Open Sans", sans-serif; font-size: 11.5px;
  line-height: 18px; text-align: center; writing-mode: vertical-rl; transform: rotate(180deg); border: 1px solid #ccc; border-left: 0; border-radius: 0 3px 3px 0;
}
.wizard { height: 65px; flex: none; display: flex; justify-content: space-between; padding: 8px 369px 0 370px; background: #f8f8f8; border-top: 1px solid #dcdcdc; }
.wizard button { width: 70px; height: 48px; border: 1px solid #ccc; border-radius: 4px; background: #fff; color: #0b7fad; font-size: 19px; line-height: 46px; padding-top: 1px; }
.wizard .done { background: #0b7fad; border-color: #096387; color: #fff; }
.badge { position: relative; left: -1px; width: 19px; height: 18px; margin: 2px 0 0; border-radius: 3px; background: #e89f06; color: #fff; font-weight: 700; font-size: 11px; line-height: 17px; text-align: center; }
.scrollbar { width: 17px; background: #f1f1f1; display: flex; flex-direction: column; align-items: center; }
.thumb { width: 13px; height: 813px; margin: 6px 0 58px; background: #c1c1c1; }
.s-up { margin-top: 7px; border: 4px solid transparent; border-bottom-color: #a3a3a3; border-top: 0; }
.s-down { border: 4px solid transparent; border-top-color: #505050; border-bottom: 0; }

/* downloads shelf */
.downloads { height: 48px; flex: none; display: flex; align-items: center; font-size: 13px; }
.dl { width: 227px; height: 36px; display: flex; align-items: center; padding: 0 17px 3px 20px; border-right: 1px solid #ccc; }
.dl:first-child { width: 231px; }
.dl span { margin: 6px 0 0 13px; color: #5a5d61; white-space: nowrap; }
.dl .w1 { letter-spacing: -.3px; }
.dl .w2 { letter-spacing: -.08px; }
.dl:nth-child(n+2) { padding-left: 16px; }
.dl .up { width: 12px; height: 8px; margin: 0 0 0 auto; }
.show-all { width: 85px; height: 32px; margin: 0 12px 4px auto; padding-top: 2px; border: 1px solid #dadce0; border-radius: 4px; background: #fff; color: #3c4043; font-size: 12px; letter-spacing: .4px; }
.dl-close { width: 12px; height: 12px; margin: 0 12px 2px 0; }

/* taskbar */
.taskbar { height: 31px; flex: none; display: flex; gap: 4px; padding-top: 1px; background: linear-gradient(#000 0 1px, #39444f 1px 2px, #141b23 3px, #05080b); color: #fff; }
.launch { position: relative; width: 96px; }
.orb { position: absolute; left: 8px; top: -6px; width: 38px; height: 38px; }
.snip { margin: 7px 0 0 70px; }
.group { height: 29px; display: flex; border: 1px solid #8b9094; border-radius: 2px; overflow: hidden; }
.g87 { width: 87px; } .g86 { width: 86px; } .g353 { width: 353px; } .g176 { width: 176px; } .g175 { width: 175px; }
.task { flex: 1; display: flex; align-items: center; gap: 4px; padding: 0 0 1px 5px; white-space: nowrap; background: linear-gradient(170deg, #88888c, #45484c 42%, #171b1e 50%, #26292c); }
.task.current { background: linear-gradient(170deg, #b4b4b4, #8e8e8e 45%, #737373 52%, #a3a3a3); }
.tray { width: 290px; display: flex; align-items: center; padding: 0 0 2px 9px; }
.ime { width: 19px; height: 22px; margin-left: 1px; border: 1px solid #43484e; background: #262c32; font: 17px/19px "Noto Sans CJK KR", sans-serif; text-align: center; }
.ime.latin { margin-left: 3px; font: 22px/21px "Liberation Serif", serif; }
.t-opt { width: 10px; height: 18px; margin: -4px 0 0 7px; }
.t-up { width: 8px; height: 5px; margin-left: 10px; }
.t-flag { margin-left: 13px; }
.t-net { margin-left: 9px; }
.t-vol { margin-left: 8px; }
.clock { margin-left: 24px; font-size: 12px; letter-spacing: .2px; white-space: nowrap; }
.peek { width: 13px; height: 28px; margin-left: auto; border: 1px solid #596067; background: linear-gradient(#42484e, #12171b 50%); }
```
